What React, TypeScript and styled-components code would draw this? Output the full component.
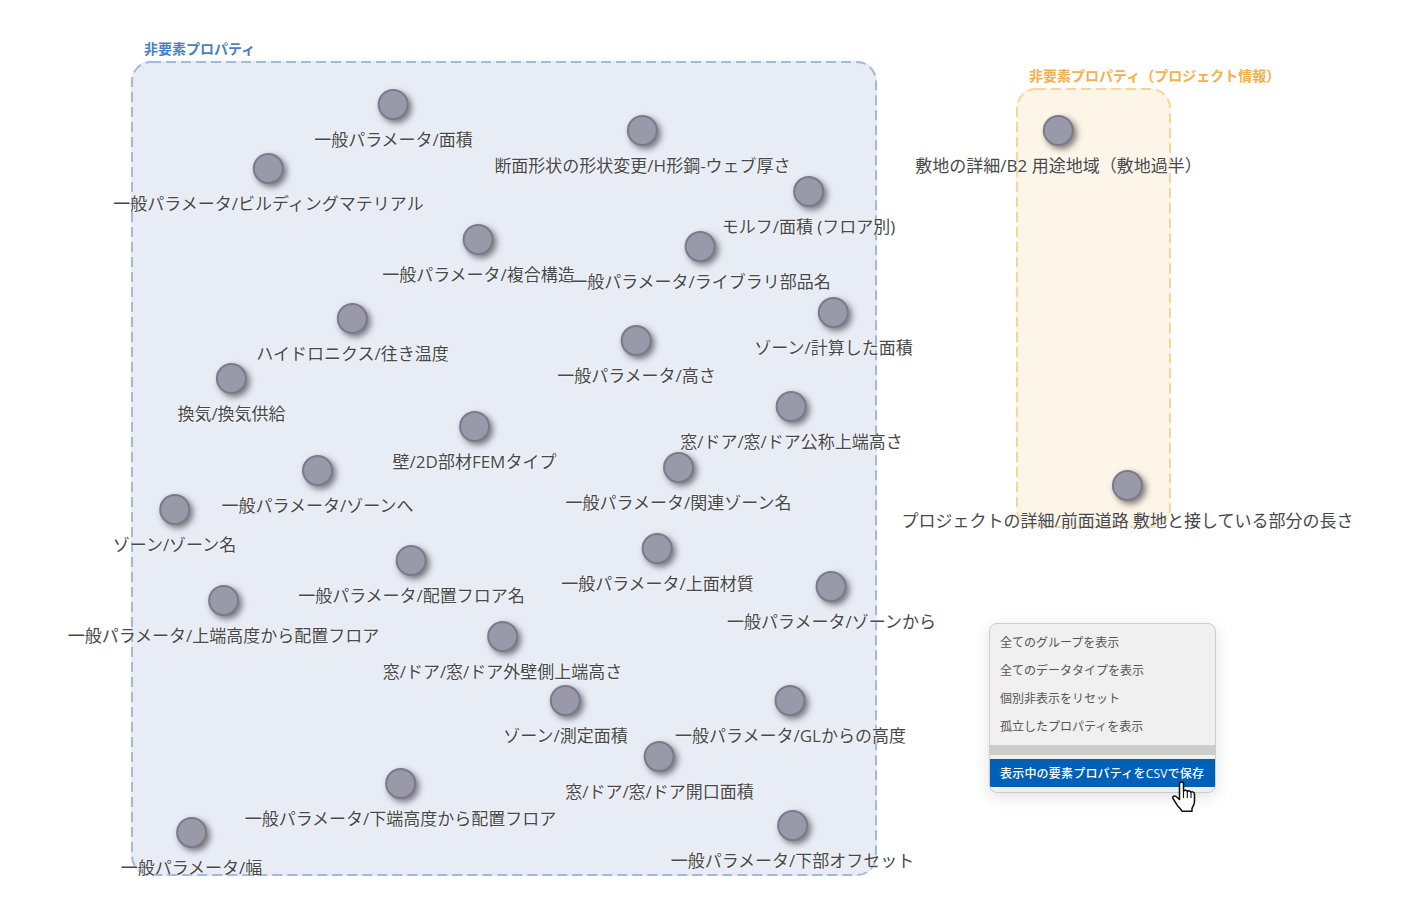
import React from "react";
import styled, { createGlobalStyle } from "styled-components";

const GlobalStyle = createGlobalStyle`
  html, body {
    margin: 0;
    padding: 0;
    background: #ffffff;
  }
  body {
    font-family: "Open Sans", "Noto Sans CJK JP", sans-serif;
  }
`;

const Canvas = styled.div`
  position: relative;
  width: 1424px;
  height: 912px;
  overflow: hidden;
  background: #ffffff;
`;

const tones = {
  blue: { fill: "#e8ecf5", edge: "#a2b9de", text: "#4a7fc1" },
  orange: { fill: "#fdf5e8", edge: "#fbd596", text: "#f5b04c" },
};

type Tone = keyof typeof tones;

const Group = styled.section<{ $x: number; $y: number }>`
  position: absolute;
  left: ${(p) => p.$x}px;
  top: ${(p) => p.$y}px;
  display: flex;
  flex-direction: column;
  gap: 4px;
`;

const GroupTitle = styled.div<{ $tone: Tone }>`
  padding-left: 13px;
  font-size: 14px;
  line-height: 16px;
  font-weight: 700;
  white-space: nowrap;
  color: ${(p) => tones[p.$tone].text};
`;

const GroupBox = styled.div<{ $w: number; $h: number; $tone: Tone }>`
  width: ${(p) => p.$w}px;
  height: ${(p) => p.$h}px;
  border-radius: 20px;
  background: ${(p) => tones[p.$tone].fill};
`;

const Outline = styled.svg`
  display: block;
  width: 100%;
  height: 100%;
`;

const NodeItem = styled.div<{ $x: number; $y: number }>`
  position: absolute;
  left: ${(p) => p.$x + 0.5}px;
  top: ${(p) => p.$y - 15}px;
  transform: translateX(-50%);
  display: flex;
  flex-direction: column;
  align-items: center;
  gap: 9px;
`;

const Dot = styled.div`
  width: 31px;
  height: 31px;
  box-sizing: border-box;
  border-radius: 50%;
  border: 2px solid #7b7a8d;
  background: #9a99aa;
  box-shadow: 3px 3px 6px rgba(0, 0, 0, 0.5);
`;

const NodeLabel = styled.div`
  font-size: 17px;
  line-height: 22px;
  white-space: nowrap;
  color: #484848;
  text-shadow: 0 0 2px rgba(255, 255, 255, 0.9), 0 0 2px rgba(255, 255, 255, 0.6);
`;

const Menu = styled.nav`
  position: absolute;
  left: 989px;
  top: 623px;
  width: 227px;
  height: 170px;
  box-sizing: border-box;
  padding-top: 4px;
  display: flex;
  flex-direction: column;
  border: 1px solid #cccccc;
  border-radius: 8px;
  background: #f0f0f0;
  box-shadow: 0 4px 16px rgba(0, 0, 0, 0.12);
  overflow: hidden;
`;

const MenuItem = styled.div<{ $active?: boolean }>`
  height: 28px;
  padding: 0 10px;
  display: flex;
  align-items: center;
  font-size: 12px;
  font-weight: ${(p) => (p.$active ? 500 : 400)};
  letter-spacing: ${(p) => (p.$active ? "0.2px" : "0")};
  white-space: nowrap;
  color: ${(p) => (p.$active ? "#ffffff" : "#555555")};
  background: ${(p) => (p.$active ? "#0060b8" : "transparent")};
`;

const MenuDivider = styled.div`
  height: 10px;
  margin: 5px 0 4px;
  background: #cccccc;
`;

const Pointer = styled.svg`
  position: absolute;
  left: 1170px;
  top: 780px;
  width: 28px;
  height: 36px;
`;

const blueNodes: [number, number, string][] = [
  [393, 104, "一般パラメータ/面積"],
  [642, 130, "断面形状の形状変更/H形鋼-ウェブ厚さ"],
  [268, 168, "一般パラメータ/ビルディングマテリアル"],
  [808, 191, "モルフ/面積 (フロア別)"],
  [478, 239, "一般パラメータ/複合構造"],
  [700, 246, "一般パラメータ/ライブラリ部品名"],
  [833, 312, "ゾーン/計算した面積"],
  [352, 318, "ハイドロニクス/往き温度"],
  [636, 340, "一般パラメータ/高さ"],
  [231, 378, "換気/換気供給"],
  [791, 406, "窓/ドア/窓/ドア公称上端高さ"],
  [474, 426, "壁/2D部材FEMタイプ"],
  [678, 467, "一般パラメータ/関連ゾーン名"],
  [317, 470, "一般パラメータ/ゾーンへ"],
  [174, 509, "ゾーン/ゾーン名"],
  [657, 548, "一般パラメータ/上面材質"],
  [411, 560, "一般パラメータ/配置フロア名"],
  [831, 586, "一般パラメータ/ゾーンから"],
  [223, 600, "一般パラメータ/上端高度から配置フロア"],
  [502, 636, "窓/ドア/窓/ドア外壁側上端高さ"],
  [565, 700, "ゾーン/測定面積"],
  [790, 700, "一般パラメータ/GLからの高度"],
  [659, 756, "窓/ドア/窓/ドア開口面積"],
  [400, 783, "一般パラメータ/下端高度から配置フロア"],
  [792, 825, "一般パラメータ/下部オフセット"],
  [191, 832, "一般パラメータ/幅"],
];

const orangeNodes: [number, number, string][] = [
  [1058, 130, "敷地の詳細/B2 用途地域（敷地過半）"],
  [1127, 485, "プロジェクトの詳細/前面道路 敷地と接している部分の長さ"],
];

const menuItems = [
  "全てのグループを表示",
  "全てのデータタイプを表示",
  "個別非表示をリセット",
  "孤立したプロパティを表示",
];

const DashedBox = ({ w, h, tone }: { w: number; h: number; tone: Tone }) => (
  <GroupBox $w={w} $h={h} $tone={tone}>
    <Outline viewBox={`0 0 ${w} ${h}`}>
      <rect
        x="1"
        y="1"
        width={w - 2}
        height={h - 2}
        rx="19"
        fill="none"
        stroke={tones[tone].edge}
        strokeWidth="2"
        strokeDasharray="10 5"
      />
    </Outline>
  </GroupBox>
);

const App = () => {
  return (
    <Canvas>
      <GlobalStyle />
      <Group $x={131} $y={41}>
        <GroupTitle $tone="blue">非要素プロパティ</GroupTitle>
        <DashedBox w={746} h={815} tone="blue" />
      </Group>
      <Group $x={1016} $y={68}>
        <GroupTitle $tone="orange">非要素プロパティ（プロジェクト情報）</GroupTitle>
        <DashedBox w={155} h={440} tone="orange" />
      </Group>

      {[...blueNodes, ...orangeNodes].map(([x, y, label]) => (
        <NodeItem key={label} $x={x} $y={y}>
          <Dot />
          <NodeLabel>{label}</NodeLabel>
        </NodeItem>
      ))}

      <Menu>
        {menuItems.map((item) => (
          <MenuItem key={item}>{item}</MenuItem>
        ))}
        <MenuDivider />
        <MenuItem $active>表示中の要素プロパティをCSVで保存</MenuItem>
      </Menu>

      <Pointer viewBox="0 0 28 36">
        <path
          d="M9.500 4a2 2 0 0 1 4 0v7c1-1.200 3.300-1 3.800.5 1-1 3.200-.8 3.700.7 1.200-.8 3.500-.2 3.500 2v7c0 3-1 4.500-2.500 7v3H12c-1-2-2.500-3-4.500-5.500L3 18.500c-1-1.500 1-3.500 3-2l3.500 3z"
          fill="#ffffff"
          stroke="#111111"
          strokeWidth="1.5"
          strokeLinejoin="round"
        />
        <path d="M13.500 11v7M17.300 11.500V18M21 12.200V18" fill="none" stroke="#111111" strokeWidth="1.100" />
      </Pointer>
    </Canvas>
  );
};

export default App;
